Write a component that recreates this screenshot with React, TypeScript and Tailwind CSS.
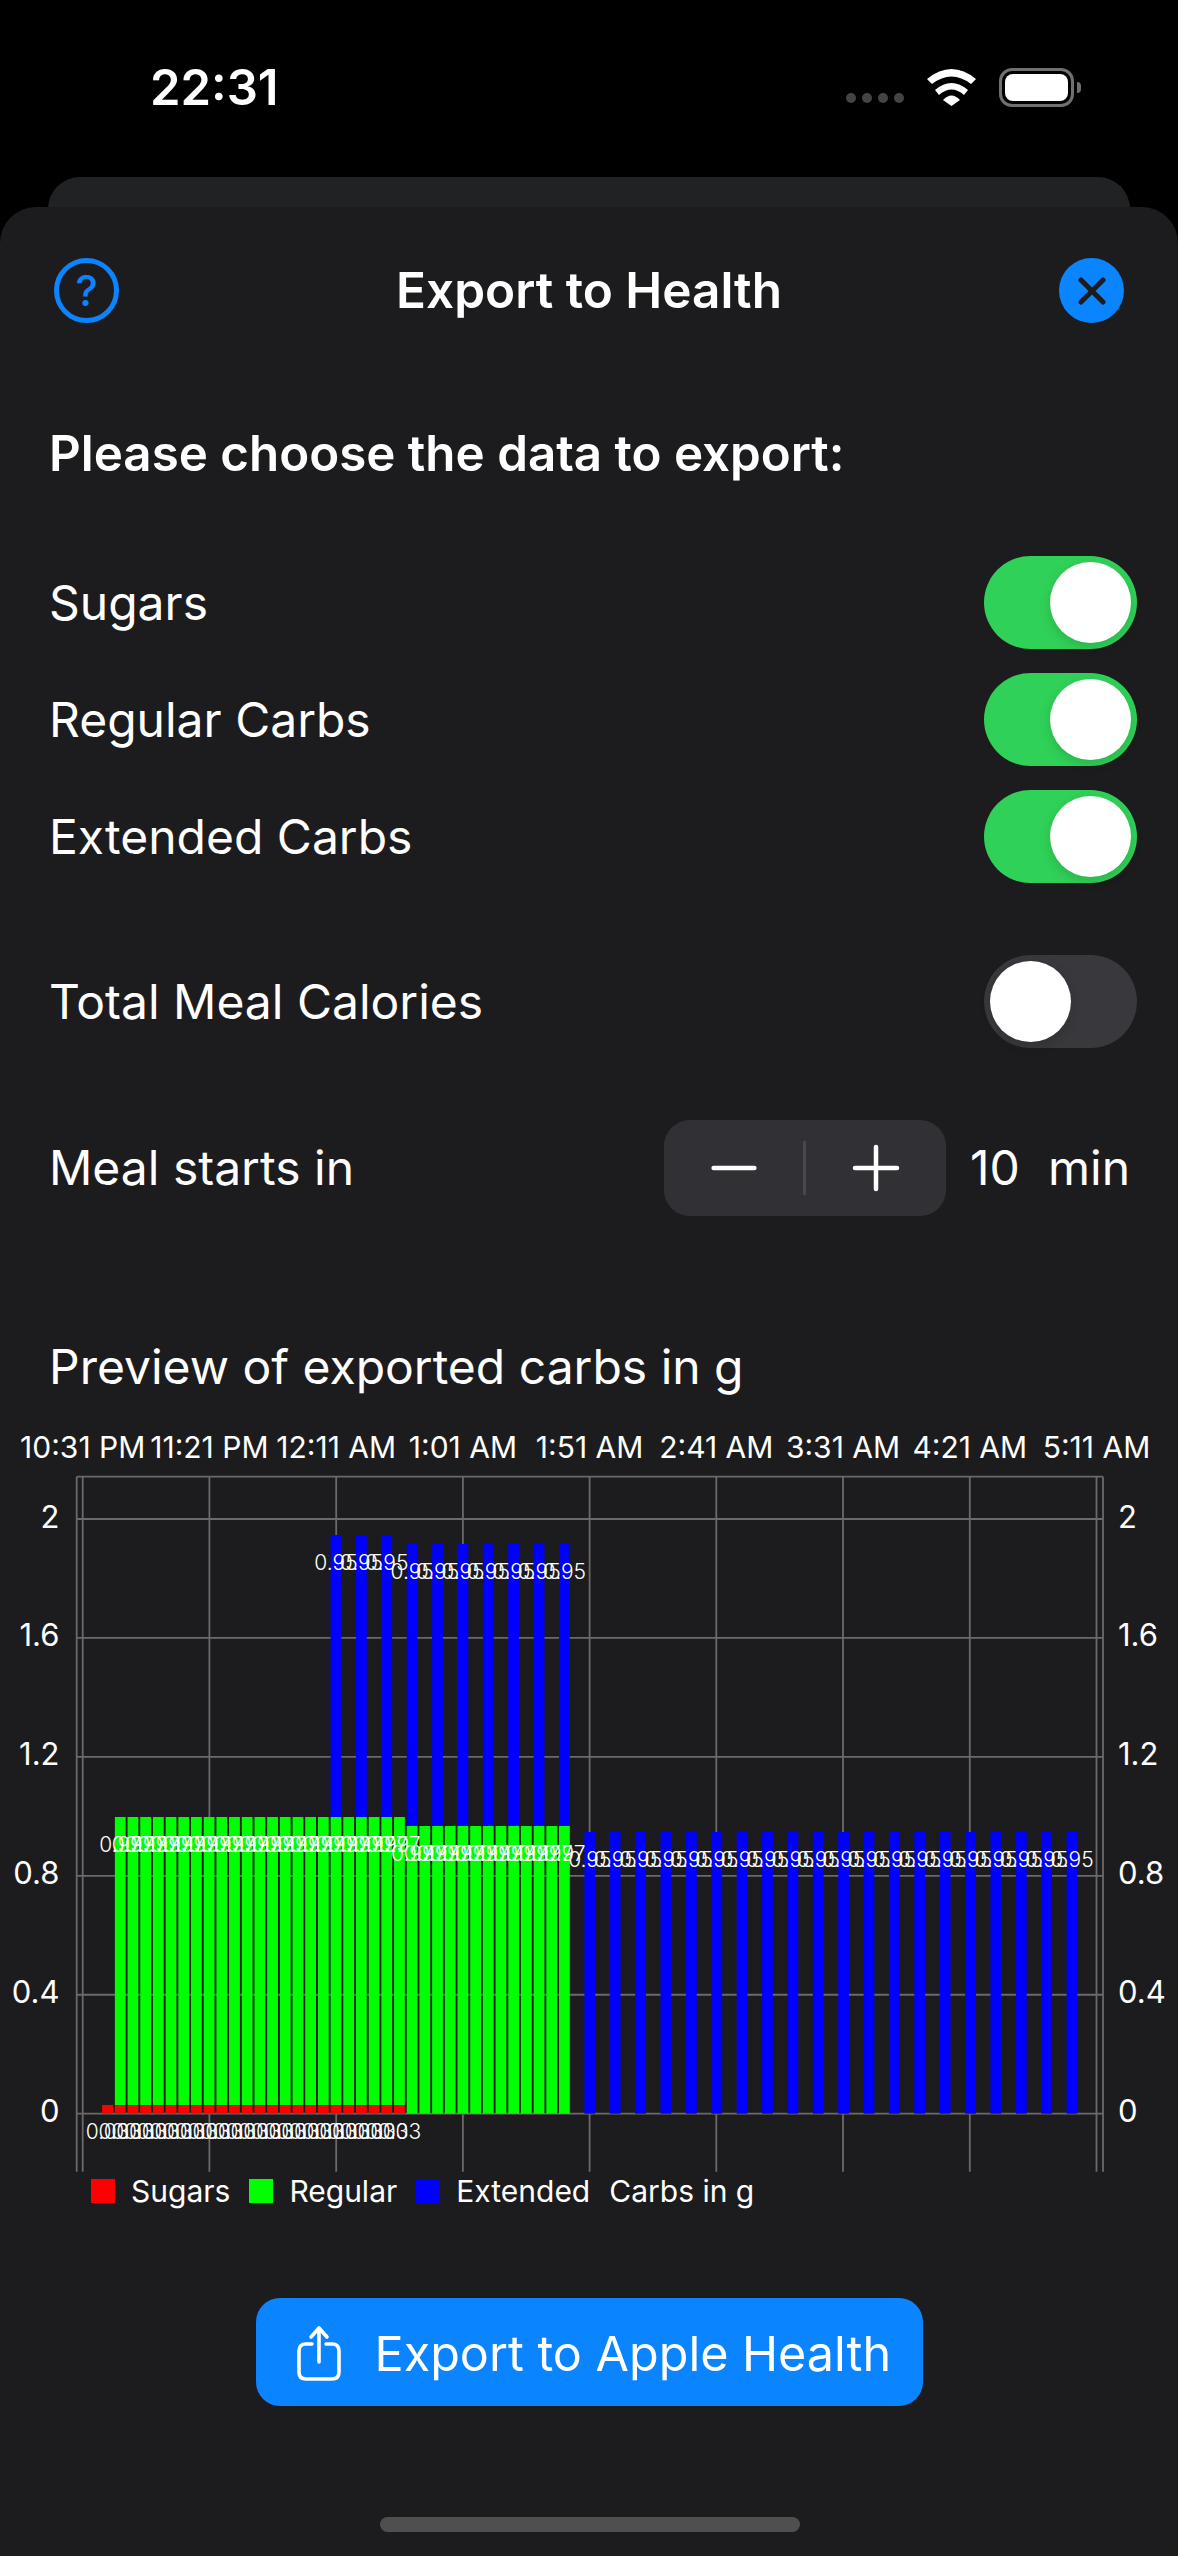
import { Minus, Plus } from 'lucide-react';

const font = "font-['Inter','Noto_Sans',sans-serif]";

// chart geometry, in page pixels: the svg starts at the left edge, y 1420
const top = 1420;
const yOf = (v: number) => 2113.7 - top - (v / 2) * 594.7;
const barX = (k: number) => 336 + k * 12.69;
const range = (a: number, b: number, step = 1) => {
  const out: number[] = [];
  for (let k = a; k <= b; k += step) out.push(k);
  return out;
};

const timeTicks = [
  { x: 82.7, label: '10:31 PM' },
  { x: 209.4, label: '11:21 PM' },
  { x: 336.2, label: '12:11 AM' },
  { x: 462.9, label: '1:01 AM' },
  { x: 589.6, label: '1:51 AM' },
  { x: 716.3, label: '2:41 AM' },
  { x: 843, label: '3:31 AM' },
  { x: 969.8, label: '4:21 AM' },
  { x: 1096.5, label: '5:11 AM' },
];
const valueTicks = [2, 1.6, 1.2, 0.8, 0.4, 0];

function Chart() {
  const rects: { x: number; y1: number; y2: number; fill: string }[] = [];
  const labels: { x: number; y: number; text: string }[] = [];
  const bw = 10.8;

  // sugars
  range(-18, 5).forEach((k) => {
    rects.push({ x: barX(k), y1: 2105 - top, y2: yOf(0), fill: '#ff0000' });
    labels.push({ x: barX(k), y: 2139 - top, text: '0.03' });
  });
  // regular
  range(-17, 5).forEach((k) => {
    rects.push({ x: barX(k), y1: 1817 - top, y2: 2105 - top, fill: '#00ff00' });
    labels.push({ x: barX(k), y: 1851.5 - top, text: '0.97' });
  });
  range(6, 18).forEach((k) => {
    rects.push({ x: barX(k), y1: 1826 - top, y2: yOf(0), fill: '#00ff00' });
    labels.push({ x: barX(k), y: 1860.5 - top, text: '0.97' });
  });
  // extended
  range(0, 4, 2).forEach((k) => {
    rects.push({ x: barX(k), y1: 1535 - top, y2: 1817 - top, fill: '#0000ff' });
    labels.push({ x: barX(k), y: 1570 - top, text: '0.95' });
  });
  range(6, 18, 2).forEach((k) => {
    rects.push({ x: barX(k), y1: 1544 - top, y2: 1826 - top, fill: '#0000ff' });
    labels.push({ x: barX(k), y: 1579 - top, text: '0.95' });
  });
  range(20, 58, 2).forEach((k) => {
    rects.push({ x: barX(k), y1: 1832 - top, y2: yOf(0), fill: '#0000ff' });
    labels.push({ x: barX(k), y: 1867 - top, text: '0.95' });
  });

  return (
    <svg width="1178" height="756" viewBox="0 0 1178 756" className="block">
      {/* grid */}
      <g stroke="#6a6a6a" strokeWidth="1.8">
        <line x1={76.7} x2={1103} y1={1476.7 - top} y2={1476.7 - top} />
        <line x1={76.7} x2={76.7} y1={1476.7 - top} y2={2171.7 - top} />
        <line x1={1103} x2={1103} y1={1476.7 - top} y2={2171.7 - top} />
        {timeTicks.map((t) => (
          <line key={t.x} x1={t.x} x2={t.x} y1={1476.7 - top} y2={2171.7 - top} />
        ))}
        {valueTicks.map((v) => (
          <line key={v} x1={76.7} x2={1103} y1={yOf(v)} y2={yOf(v)} />
        ))}
      </g>
      {rects.map((r, i) => (
        <rect key={i} x={r.x - bw / 2} y={r.y1} width={bw} height={r.y2 - r.y1} fill={r.fill} />
      ))}
      {/* axis labels */}
      <g fill="#ffffff" fontFamily="Inter, sans-serif" fontWeight="400">
        {timeTicks.map((t) => (
          <text key={t.x} x={t.x} y={1458 - top} textAnchor="middle" fontSize="30">
            {t.label}
          </text>
        ))}
        {valueTicks.map((v) => (
          <g key={v} fontSize="31">
            <text x={59.5} y={yOf(v) + 8.5} textAnchor="end">
              {v}
            </text>
            <text x={1118} y={yOf(v) + 8.5}>
              {v}
            </text>
          </g>
        ))}
      </g>
      {/* value labels */}
      <g fill="#ffffff" fontSize="21" fontFamily="Inter, sans-serif" fontWeight="350">
        {labels.map((l, i) => (
          <text key={i} x={l.x} y={l.y} textAnchor="middle">
            {l.text}
          </text>
        ))}
      </g>
    </svg>
  );
}

function Toggle({ on }: { on: boolean }) {
  return (
    <div
      className={`w-[153px] h-[93px] rounded-full flex items-center px-[6px] ${
        on ? 'bg-[#30d158] justify-end' : 'bg-[#39393d] justify-start'
      }`}
    >
      <div className="w-[81px] h-[81px] rounded-full bg-white shadow-[0_4px_12px_rgba(0,0,0,0.15)]" />
    </div>
  );
}

function Row({ label, on, className }: { label: string; on: boolean; className: string }) {
  return (
    <div className={`flex items-center justify-between h-[93px] ${className}`}>
      <span className="text-[48px] text-white">{label}</span>
      <Toggle on={on} />
    </div>
  );
}

function Legend({ color, label }: { color: string; label: string }) {
  return (
    <div className="flex items-center gap-[16px]">
      <div className={`w-[24px] h-[24px] ${color}`} />
      <span className="text-[30px] text-white leading-[30px]">{label}</span>
    </div>
  );
}

export default function App() {
  return (
    <div className={`w-[1178px] h-[2556px] bg-black overflow-hidden flex flex-col ${font}`}>
      {/* status bar */}
      <div className="h-[177px] flex-none flex items-start justify-between pl-[150px] pr-[97px] pt-[58px] text-white">
        <span className="text-[49px] leading-[60px] font-semibold">22:31</span>
        <div className="flex items-center mt-[10px]">
          <div className="flex items-center gap-[6px] mt-[20px] mr-[23px]">
            <div className="w-[10px] h-[10px] rounded-full bg-[#444444]" />
            <div className="w-[10px] h-[10px] rounded-full bg-[#444444]" />
            <div className="w-[10px] h-[10px] rounded-full bg-[#444444]" />
            <div className="w-[10px] h-[10px] rounded-full bg-[#444444]" />
          </div>
          <svg width="49" height="38" viewBox="0 0 49 38" className="mr-[23px]">
            <path d="M16 31 Q24.5 22 33 31 L24.5 37 Z" fill="#fff" />
            <path d="M8 21 Q24.5 7 41 21 L37 26 Q24.5 15 12 26 Z" fill="#fff" />
            <path d="M0 10 Q24.5 -10 49 10 L44 15 Q24.5 0 5 15 Z" fill="#fff" />
          </svg>
          <div className="w-[75px] h-[39px] rounded-[13px] border-[3px] border-[#707070] p-[3px]">
            <div className="w-full h-full rounded-[8px] bg-white" />
          </div>
          <div className="w-[4px] h-[11px] rounded-r-full bg-[#707070] ml-[3px]" />
        </div>
      </div>

      {/* sheet behind */}
      <div className="flex-none h-[60px] mx-[48px] -mb-[30px] rounded-t-[32px] bg-[#202224]" />

      {/* sheet */}
      <div className="flex-1 relative rounded-t-[36px] bg-[#1c1c1e] flex flex-col items-stretch">
        <div className="flex items-center justify-between px-[54px] pt-[51px]">
          <div className="w-[65px] h-[65px] rounded-full border-[5px] border-[#0a84ff] flex items-center justify-center text-[#0a84ff] text-[42px] font-medium leading-none">
            ?
          </div>
          <h1 className="text-[49.5px] font-semibold text-white leading-[65px]">Export to Health</h1>
          <div className="w-[65px] h-[65px] rounded-full bg-[#0a84ff] flex items-center justify-center">
            <svg width="28" height="28" viewBox="0 0 28 28" stroke="#1c1c1e" strokeWidth="5" strokeLinecap="round">
              <path d="M3 3 L25 25 M25 3 L3 25" />
            </svg>
          </div>
        </div>

        <div className="pl-[49px] pr-[41px]">
          <h2 className="text-[49.3px] font-semibold text-white leading-[60px] mt-[100px]">
            Please choose the data to export:
          </h2>
          <Row label="Sugars" on className="mt-[73px]" />
          <Row label="Regular Carbs" on className="mt-[24px]" />
          <Row label="Extended Carbs" on className="mt-[24px]" />
          <Row label="Total Meal Calories" on={false} className="mt-[72px]" />

          <div className="flex items-center h-[96px] mt-[72px]">
            <span className="text-[48px] text-white flex-1">Meal starts in</span>
            <div className="w-[282px] h-[96px] rounded-[26px] bg-[#313135] flex items-center">
              <div className="flex-1 flex items-center justify-center">
                <Minus size={70} strokeWidth={1.5} color="#fff" />
              </div>
              <div className="w-[3px] h-[54px] bg-[#48484c]" />
              <div className="flex-1 flex items-center justify-center">
                <Plus size={72} strokeWidth={1.5} color="#fff" />
              </div>
            </div>
            <span className="text-[48px] text-white ml-[24px] w-[78px]">10</span>
            <span className="text-[48px] text-white mr-[7px]">min</span>
          </div>

          <div className="text-[48px] text-white leading-[60px] mt-[121px]">Preview of exported carbs in g</div>
        </div>

        <div className="mt-[23px]">
          <Chart />
        </div>

        <div className="flex items-center gap-[19px] pl-[91px]">
          <Legend color="bg-[#ff0000]" label="Sugars" />
          <Legend color="bg-[#00ff00]" label="Regular" />
          <Legend color="bg-[#0000ff]" label="Extended" />
          <span className="text-[30px] text-white leading-[30px]">Carbs in g</span>
        </div>

        <div className="self-center mt-[92px] w-[667px] h-[108px] rounded-[24px] bg-[#0a84ff] flex items-center pl-[39px] pt-[4px] gap-[32px]">
          <svg width="48" height="60" viewBox="0 0 48 60" fill="none" stroke="#fff" strokeWidth="3.6" strokeLinecap="round" strokeLinejoin="round">
            <path d="M17 20 H11 Q4 20 4 27 V48 Q4 55 11 55 H37 Q44 55 44 48 V27 Q44 20 37 20 H31" />
            <path d="M24 38 V4 M16 13 L24 4 L32 13" />
          </svg>
          <span className="text-[48.5px] text-white">Export to Apple Health</span>
        </div>

        <div className="absolute left-[380px] bottom-[24px] w-[420px] h-[15px] rounded-full bg-[#4f4f4f]" />
      </div>
    </div>
  );
}
